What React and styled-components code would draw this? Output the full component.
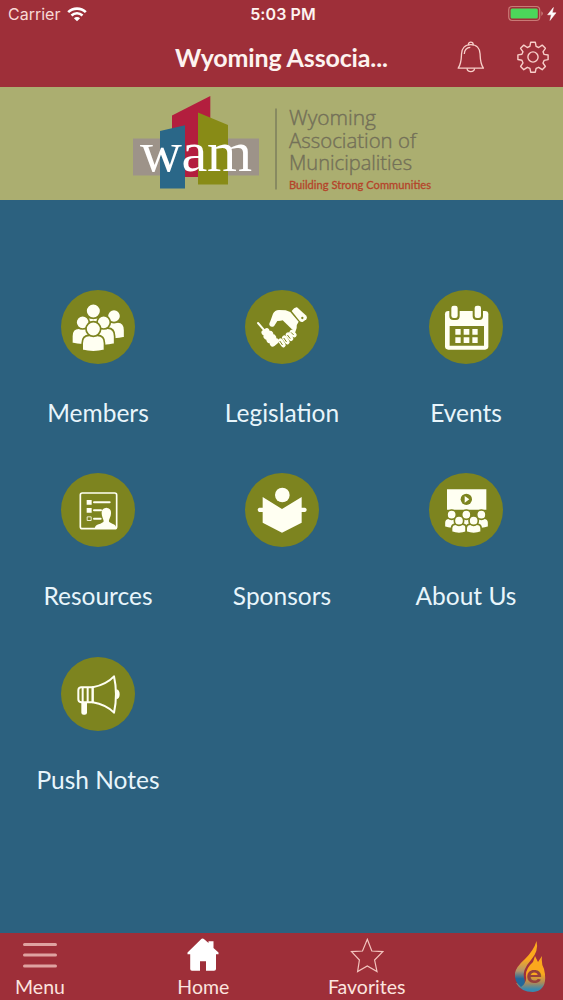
import React from "react";
import styled, { createGlobalStyle } from "styled-components";

const GlobalStyle = createGlobalStyle`
	* {
		box-sizing: border-box;
	}
	body {
		margin: 0;
		background: #2c617f;
	}
`;

const Screen = styled.div`
	width: 563px;
	height: 1000px;
	display: flex;
	flex-direction: column;
	overflow: hidden;
	background: #2c617f;
	color: #fdf3f0;
	font-family: Lato, "Liberation Sans", sans-serif;
	svg {
		display: block;
		flex: none;
	}
`;

const Header = styled.header`
	height: 87px;
	background: #9e2f39;
`;

const StatusBar = styled.div`
	height: 28px;
	padding: 0 5px 0 8px;
	display: grid;
	grid-template-columns: 1fr auto 1fr;
	align-items: center;
	font-family: Inter, "Liberation Sans", sans-serif;
	font-size: 16px;
	line-height: 28px;
`;

const Carrier = styled.div`
	display: flex;
	align-items: center;
	gap: 7px;
	color: #f8d9d6;
`;

const Clock = styled.div`
	font-weight: 600;
	letter-spacing: 0.1px;
`;

const Power = styled.div`
	display: flex;
	justify-content: flex-end;
`;

const TitleBar = styled.div`
	height: 58px;
	padding-right: 14px;
	display: grid;
	grid-template-columns: 175px 1fr auto auto;
	align-items: center;
`;

const Title = styled.h1`
	grid-column: 2;
	margin: 0;
	font-size: 25px;
	font-weight: 700;
	line-height: 58px;
	letter-spacing: -0.15px;
	white-space: nowrap;
`;

const IconButton = styled.button`
	width: ${(props) => props.$width}px;
	padding: 0;
	border: 0;
	background: none;
	color: #f8cfc9;
`;

const Banner = styled.div`
	height: 113px;
	background: #abae70;
`;

const Tiles = styled.main`
	flex: 1;
	padding: 90px 5px 0 6px;
	display: grid;
	grid-template-columns: repeat(3, 1fr);
	grid-auto-rows: 183.4px;
`;

const Tile = styled.div`
	display: flex;
	flex-direction: column;
	align-items: center;
`;

const Disc = styled.div`
	width: 74px;
	height: 74px;
	border-radius: 50%;
	background: #7d841f;
`;

const Label = styled.span`
	margin-top: 34px;
	font-size: 24.5px;
	line-height: 30px;
	color: #e8f5fb;
	white-space: nowrap;
`;

const TabBar = styled.nav`
	height: 67px;
	padding-left: 7px;
	display: flex;
	justify-content: space-between;
	background: #9e2f39;
`;

const Tab = styled.div`
	width: 66px;
	padding-top: 4px;
	display: flex;
	flex-direction: column;
	align-items: center;
	font-size: 19.5px;
	line-height: 24px;
	color: #fbe3df;
	svg {
		margin-bottom: 2px;
	}
`;

const WifiIcon = () => (
	<svg width="20" height="15" viewBox="0 0 20 15" fill="none" stroke="#fff">
		<path d="M1.2 5.2a12.5 12.5 0 0 1 17.6 0" strokeWidth="2.6" />
		<path d="M4.5 8.5a7.8 7.8 0 0 1 11 0" strokeWidth="2.5" />
		<path d="M10 14.3 6.9 11.2a4.4 4.4 0 0 1 6.2 0z" fill="#fff" stroke="none" />
	</svg>
);

const BatteryIcon = () => (
	<svg width="50" height="18" viewBox="0 0 50 18">
		<rect x="0.7" y="1.5" width="31" height="14" rx="3.5" fill="none" stroke="#c97a76" strokeWidth="1.2" />
		<rect x="2.6" y="3.4" width="27.2" height="10.2" rx="1.5" fill="#4cd65a" />
		<path d="M33.3 6.3v4.6q1.6-.8 1.6-2.3t-1.6-2.3" fill="#c97a76" />
		<path d="M45.4 2.5 39.6 9.8h3.7l-1.3 5.6 6-7.6h-3.7z" fill="#fff" stroke="#fff" strokeWidth=".5" />
	</svg>
);

const BellIcon = () => (
	<svg width="28" height="32" viewBox="0 0 28 32" fill="none" stroke="currentColor" strokeWidth="1.3" strokeLinejoin="round">
		<path d="M11.4 4.2V3.5a2.4 2.4 0 0 1 4.8 0v.7" />
		<path d="M13.8 3.6C8 3.6 4.7 7.5 4.5 13 4.3 19 4.4 22.6 1.2 27.2H26.4C23.2 22.6 23.3 19 23.1 13 22.9 7.5 19.6 3.6 13.8 3.6z" />
		<path d="M7.3 13c.2-4 2.5-6.5 6-6.7M10 27.4c.5 4.3 7.1 4.3 7.6 0" />
	</svg>
);

const GearIcon = () => (
	<svg width="32" height="32" viewBox="0 0 32 32" fill="none" stroke="currentColor" strokeWidth="1.4" strokeLinejoin="round">
		<circle cx="16" cy="16" r="5.1" />
		<path d="M13.7 1.2h4.6l.8 4.2 2.6 1.1 3.5-2.4 3.2 3.2-2.4 3.5 1.1 2.6 4 .6v4.6l-4 .8-1.1 2.6 2.4 3.5-3.2 3.2-3.5-2.4-2.6 1.1-.8 3.8h-4.6l-.8-3.8-2.6-1.1-3.5 2.4-3.2-3.2L6 21.9l-1.1-2.6-4-.8v-4.6l4-.6L6 10.8 3.6 7.3l3.2-3.2 3.5 2.4 2.6-1.1z" />
	</svg>
);

const Logo = () => (
	<svg width="563" height="113" viewBox="0 87 563 113">
		<path d="M133 138.5h126V175.5H133z" fill="#9d9389" />
		<path d="M172 115.5 210.3 96v81H172z" fill="#b31e3e" />
		<path d="M160 131 185 125.3V188.5H160z" fill="#2a6788" />
		<path d="M198 112.5 228 125v59.5H198z" fill="#888b16" />
		<text x="140" y="170.5" fontFamily="Liberation Serif, serif" fontSize="58" fill="#fff" textLength="112">
			wam
		</text>
		<path d="M276 108.5v81" stroke="#75775a" strokeWidth="1.3" />
		<g fontFamily="Open Sans, sans-serif" fontWeight="300" fontSize="20" fill="#737058" stroke="#737058" strokeWidth=".4">
			<text x="289" y="124.7" textLength="87" lengthAdjust="spacingAndGlyphs">Wyoming</text>
			<text x="289" y="147.7" textLength="127" lengthAdjust="spacingAndGlyphs">Association of</text>
			<text x="289" y="170.4" textLength="123" lengthAdjust="spacingAndGlyphs">Municipalities</text>
		</g>
		<text x="289" y="188.5" fontFamily="Lato, sans-serif" fontSize="11.5" fill="#b5442a" stroke="#b5442a" strokeWidth=".3" textLength="142" lengthAdjust="spacingAndGlyphs">
			Building Strong Communities
		</text>
	</svg>
);

// All tile glyphs share a 222 unit box, three units to a pixel.
const Glyph = ({ children }) => (
	<svg width="74" height="74" viewBox="0 0 222 222" fill="#fffff2">
		{children}
	</svg>
);

const Person = ({ x, y, r, w, h }) => (
	<g stroke="#7d841f" strokeWidth="5">
		<path
			d={`M${x - w / 2} ${y + r + h - 5}v${-h * 0.45}q0-${h * 0.5} ${w * 0.32}-${h * 0.5}h${w * 0.36}q${w * 0.32} 0 ${w * 0.32} ${h * 0.5}v${h * 0.45}q${-w / 2} 9 ${-w} 0z`}
		/>
		<circle cx={x} cy={y} r={r} />
	</g>
);

const MembersGlyph = () => (
	<Glyph>
		<Person x={159} y={78} r={20} w={64} h={50} />
		<Person x={97} y={63} r={22} w={66} h={54} />
		<Person x={65} y={97} r={20} w={65} h={48} />
		<Person x={128} y={97} r={20} w={66} h={50} />
		<Person x={97} y={117} r={22} w={67} h={47} />
	</Glyph>
);

const HandshakeGlyph = () => (
	<Glyph>
		<path d="M140 63Q148 51 156 52L184 77Q188 83 184 88L173 96Q168 97 164 93z" />
		<circle cx="172" cy="84" r="3.5" fill="#7d841f" />
		<path d="M136 66 161 95Q154 103 155 114L150 129 139 134 112 109 109 92 97 93 88 107Q80 115 73 105Q72 100 76 94L84 71Q89 61 102 60L122 61z" />
		<path d="M98 95 113 91 143 120 137 128 100 148 91 115z" fill="#7d841f" />
		<g fill="none" strokeLinecap="round">
			<path d="M140 127l8 8M129 134l9 12M118 143l9 13M106 152l9 13" stroke="#fffff2" strokeWidth="14" />
			<path d="M139 128l6 6M128 136l7 9M117 145l7 10M105 154l7 10" stroke="#7d841f" strokeWidth="3" />
			<path d="M39 99 58 121" stroke="#fffff2" strokeWidth="6" />
			<path d="M58 128 65 123M64 140 76 131M73 151 85 142M83 161 93 153" stroke="#fffff2" strokeWidth="17" />
		</g>
	</Glyph>
);

const CalendarGlyph = () => (
	<Glyph>
		<rect x="48" y="63" width="130" height="116" rx="10" />
		<path d="M62 108h103v59H62z" fill="#7d841f" />
		<path d="M61 62h31v17q0 11-11 11h-8q-12 0-12-11zM131 62h31v17q0 11-11 11h-8q-12 0-12-11z" fill="#7d841f" />
		<rect x="67" y="47" width="19" height="37" rx="7" />
		<rect x="137" y="47" width="19" height="37" rx="7" />
		<path d="M79 117h16v17H79zM104 117h17v17H104zM130 117h16v17H130zM79 142h16v17H79zM104 142h17v17H104zM130 142h16v17H130z" />
	</Glyph>
);

const ResourcesGlyph = () => (
	<Glyph>
		<rect x="58" y="60" width="109" height="107" rx="6" fill="none" stroke="#fffff2" strokeWidth="5" />
		<path d="M77 81h15v14H77zM77 105h15v14H77z" />
		<path d="M78.5 131.5h12v11h-12z" fill="none" stroke="#fffff2" strokeWidth="2.5" />
		<path d="M99 88h47M99 112h21M99 137h20" stroke="#fffff2" strokeWidth="6" strokeLinecap="round" />
		<path d="M101 167q0-12 17-15l9-5q2-3-1-9l-3-10q-5-22 13-24 18 2 13 24l-4 11q-3 7 1 9l8 4q12 3 12 15z" />
	</Glyph>
);

const ReaderGlyph = () => (
	<Glyph>
		<circle cx="112" cy="66" r="22" />
		<path d="M53 72l58 36 59-36v32h10q5 1 5 6t-5 7h-10v32l-59 30-58-30v-32H43q-5-2-5-7t5-6h10z" />
	</Glyph>
);

const AudienceGlyph = () => (
	<Glyph>
		<path d="M54 49h118v61H54z" />
		<circle cx="112" cy="79" r="17" fill="#7d841f" />
		<path d="M107 69l14 10-14 10z" />
		{[68, 112, 157].map((x) => (
			<Person key={x} x={x} y={125} r={14} w={44} h={28} />
		))}
		{[90, 134].map((x) => (
			<Person key={x} x={x} y={143} r={14} w={45} h={25} />
		))}
	</Glyph>
);

const MegaphoneGlyph = () => (
	<Glyph>
		<g fill="none" stroke="#fffff2" strokeWidth="6" strokeLinejoin="round">
			<path d="M95 91Q137 82 159 58Q171 112 159 167Q135 143 95 136z" />
			<path d="M60 91h35v45H60q-8-1-8-9v-27q0-8 8-9z" />
			<path d="M65 91v45M80 91v45" />
		</g>
		<path d="M61 136h17v31q0 6-7 6h-3q-7 0-7-6zM166 97q10 2 10 15t-10 15z" />
	</Glyph>
);

const MenuIcon = () => (
	<svg width="34" height="36" viewBox="0 0 34 36" stroke="#dfa3a1" strokeWidth="3" strokeLinecap="round">
		<path d="M1.5 7.5h31M1.5 18h31M1.5 29h31" />
	</svg>
);

const HomeIcon = () => (
	<svg width="34" height="36" viewBox="0 0 34 36" fill="#fff">
		<path d="M16.5 1.5Q17.4 1.5 18.5 2.5L22.5 6V4.2H27.5V11L32.5 15.6V17.2H30V32Q30 33.8 28 33.8H20V24.3H14V33.8H6Q4.2 33.8 4.2 32V17.2H1.5V15.6L14.8 2.5Q15.6 1.5 16.5 1.5z" />
	</svg>
);

const StarIcon = () => (
	<svg width="34" height="36" viewBox="0 0 34 36" fill="none" stroke="#f3c4be" strokeWidth="1.2">
		<path d="M17.3 2.3 21.8 14 32.8 14.6 24.6 23 27 34.6 17.3 29 7.6 34.6 9.4 23 1.5 14.6 12.5 14z" />
	</svg>
);

const FlameIcon = () => (
	<svg width="34" height="58" viewBox="0 -2 34 58">
		<defs>
			<linearGradient id="flame" x1="0" y1="0" x2="0" y2="1">
				<stop offset="0.5" stopColor="#fba81d" />
				<stop offset="0.75" stopColor="#a98a5c" />
				<stop offset="0.92" stopColor="#3989ae" />
			</linearGradient>
			<linearGradient id="tongue" x1="0" y1="0" x2="0" y2="1">
				<stop offset="0.4" stopColor="#fba81d" />
				<stop offset="0.65" stopColor="#b1946d" />
				<stop offset="0.82" stopColor="#22679a" />
			</linearGradient>
		</defs>
		<path d="M29 17Q28 25 31 30Q36 51 20 53Q8 53 3 44Q14 47 13 38Q12 30 20 23L22 17 25 23z" fill="url(#flame)" />
		<path d="M23.5 2Q26 12 18 21Q9 31 11 39Q14 44 8 48Q1 43 2 34Q3 28 12 20Q21 11 23.5 2z" fill="url(#tongue)" />
		<text x="13" y="44" fontFamily="Inter, sans-serif" fontWeight="600" fontSize="24" textLength="16" lengthAdjust="spacingAndGlyphs" fill="#96413c">
			e
		</text>
	</svg>
);

const tiles = [
	{ label: "Members", icon: MembersGlyph },
	{ label: "Legislation", icon: HandshakeGlyph },
	{ label: "Events", icon: CalendarGlyph },
	{ label: "Resources", icon: ResourcesGlyph },
	{ label: "Sponsors", icon: ReaderGlyph },
	{ label: "About Us", icon: AudienceGlyph },
	{ label: "Push Notes", icon: MegaphoneGlyph },
];

const App = () => (
	<>
		<GlobalStyle />
		<Screen>
			<Header>
				<StatusBar>
					<Carrier>
						Carrier
						<WifiIcon />
					</Carrier>
					<Clock>5:03 PM</Clock>
					<Power>
						<BatteryIcon />
					</Power>
				</StatusBar>
				<TitleBar>
					<Title>Wyoming Associa...</Title>
					<IconButton $width={60} aria-label="Notifications">
						<BellIcon />
					</IconButton>
					<IconButton $width={32} aria-label="Settings">
						<GearIcon />
					</IconButton>
				</TitleBar>
			</Header>

			<Banner>
				<Logo />
			</Banner>

			<Tiles>
				{tiles.map(({ label, icon: Icon }) => (
					<Tile key={label}>
						<Disc>
							<Icon />
						</Disc>
						<Label>{label}</Label>
					</Tile>
				))}
			</Tiles>

			<TabBar>
				<Tab>
					<MenuIcon />
					Menu
				</Tab>
				<Tab>
					<HomeIcon />
					Home
				</Tab>
				<Tab>
					<StarIcon />
					Favorites
				</Tab>
				<Tab>
					<FlameIcon />
				</Tab>
			</TabBar>
		</Screen>
	</>
);

export default App;
